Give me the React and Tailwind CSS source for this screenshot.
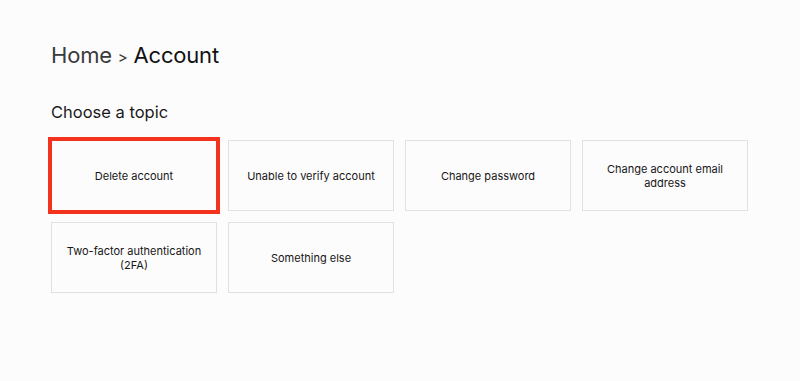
import React from 'react';

const topics = [
  { label: 'Delete account', selected: true },
  { label: 'Unable to verify account' },
  { label: 'Change password' },
  { label: 'Change account email address' },
  { label: 'Two-factor authentication (2FA)' },
  { label: 'Something else' },
];

export default function App() {
  return (
    <div className="w-[800px] h-[381px] bg-[#fdfcfd] pl-[51px] pt-[42px] font-['Inter','Liberation_Sans',sans-serif] text-[#222]">
      {/* Breadcrumb */}
      <h1 className="flex items-baseline text-[22px] leading-[26px] tracking-[-0.2px]">
        <span className="text-[#3a3a3a]">Home</span>
        <span className="mx-[6px] text-[15px] text-[#3a3a3a]">&gt;</span>
        <span className="text-[#111]">Account</span>
      </h1>

      <h2 className="mt-[31px] text-[16.5px] leading-[20px] text-[#1a1a1a]">Choose a topic</h2>

      {/* Topics */}
      <div className="mt-[18px] grid grid-cols-[repeat(4,166px)] gap-x-[11px] gap-y-[11px]">
        {topics.map(t => (
          <button
            key={t.label}
            className={`relative h-[71px] flex items-center justify-center px-[14px] text-center text-[11px] leading-[14px] text-[#161616] bg-[#fdfcfd] border border-[#e2e0e2] ${
              t.selected ? 'outline-[4px] outline-solid outline-[#f4331f] outline-offset-[-1px]' : ''
            }`}
          >
            {t.label}
          </button>
        ))}
      </div>
    </div>
  );
}
